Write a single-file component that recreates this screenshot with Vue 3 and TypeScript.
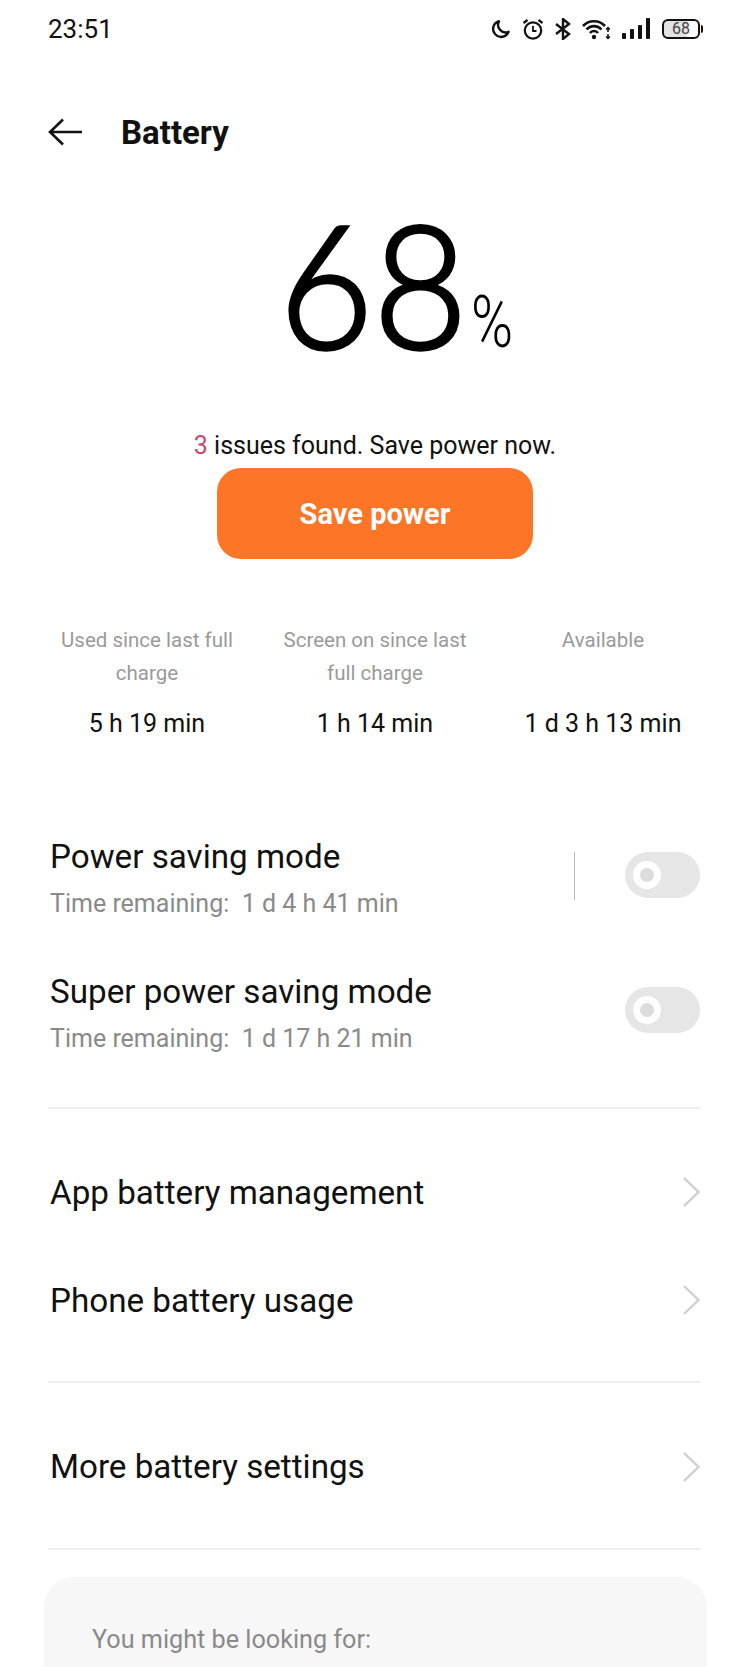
<script setup lang="ts">
interface Stat { label: string; value: string }
interface Mode { title: string; sub: string; divider: boolean }
const stats: Stat[] = [
  { label: 'Used since last full charge', value: '5 h 19 min' },
  { label: 'Screen on since last full charge', value: '1 h 14 min' },
  { label: 'Available', value: '1 d 3 h 13 min' },
]
const modes: Mode[] = [
  { title: 'Power saving mode', sub: 'Time remaining:\u00a0 1 d 4 h 41 min', divider: true },
  { title: 'Super power saving mode', sub: 'Time remaining:\u00a0 1 d 17 h 21 min', divider: false },
]
const links: string[] = ['App battery management', 'Phone battery usage']
</script>

<template>
  <div class="page">
    <div class="status">
      <span class="time">23:51</span>
      <div class="icons">
        <svg width="20" height="20" viewBox="0 0 20 20"><path d="M8 2.200a8 8 0 1 0 9.600 10.600A7.600 7.600 0 0 1 8 2.200z" fill="none" stroke="#111" stroke-width="2.400" stroke-linejoin="round"/></svg>
        <svg width="22" height="22" viewBox="0 0 22 22" fill="none" stroke="#111" stroke-width="2.200"><circle cx="11" cy="12.500" r="8.200"/><path d="M11 8v5h3.500" stroke-width="1.800"/><path d="M1.500 5l4-3M20.500 5l-4-3"/></svg>
        <svg width="16" height="22" viewBox="0 0 16 22" fill="none" stroke="#111" stroke-width="2.400"><path d="M1 6l13 10-6 5V1l6 5L1 16"/></svg>
        <svg width="29" height="22" viewBox="0 0 29 22" fill="none" stroke="#111" stroke-width="2.600"><path d="M1 8a15 15 0 0 1 22 0M4.500 11.500a10 10 0 0 1 15 0M8 15a5 5 0 0 1 8 0"/><circle cx="12" cy="19" r="2.200" fill="#111" stroke="none"/><path d="M26 10v4M26 16v4" stroke-width="1.600"/><path d="M24 11.500l2-2 2 2M24 18.500l2 2 2-2" stroke-width="1.300"/></svg>
        <svg width="28" height="22" viewBox="0 0 28 22" fill="#111"><rect x="0" y="15" width="4" height="6" rx="1"/><rect x="8" y="11" width="4" height="10" rx="1"/><rect x="16" y="7" width="4" height="14" rx="1"/><rect x="24" y="0" width="4" height="21" rx="1"/></svg>
        <div class="battery"><span class="level">68</span><i class="tip"></i></div>
      </div>
    </div>

    <header class="head">
      <svg width="34" height="28" viewBox="0 0 34 28" fill="none" stroke="#111" stroke-width="2.600"><path d="M15 1.500L2 14l13 12.500M2 14h32"/></svg>
      <h1>Battery</h1>
    </header>

    <div class="big"><span class="num">68</span><span class="pct">%</span></div>
    <p class="issues"><span class="red">3</span> issues found. Save power now.</p>
    <button class="save">Save power</button>

    <div class="stats">
      <div v-for="s in stats" :key="s.label" class="stat">
        <div class="label">{{ s.label }}</div>
        <div class="value">{{ s.value }}</div>
      </div>
    </div>

    <div class="modes">
      <div v-for="m in modes" :key="m.title" class="mode">
        <div class="mode-text">
          <div class="title">{{ m.title }}</div>
          <div class="sub">{{ m.sub }}</div>
        </div>
        <i v-if="m.divider" class="vline"></i>
        <div class="toggle"><i class="knob"></i></div>
      </div>
    </div>

    <hr class="rule" />

    <div class="links">
      <div v-for="l in links" :key="l" class="link">
        <span>{{ l }}</span>
        <svg width="18" height="32" viewBox="0 0 18 32" fill="none" stroke="#cfcfcf" stroke-width="2.400"><path d="M2 2l14.500 14L2 30"/></svg>
      </div>
    </div>

    <hr class="rule" />

    <div class="link solo">
      <span>More battery settings</span>
      <svg width="18" height="32" viewBox="0 0 18 32" fill="none" stroke="#cfcfcf" stroke-width="2.400"><path d="M2 2l14.500 14L2 30"/></svg>
    </div>

    <hr class="rule" />

    <section class="card">You might be looking for:</section>
  </div>
</template>

<style>
html, body { margin: 0; background: #fff; }
</style>

<style scoped>
.page {
  width: 750px;
  height: 1667px;
  overflow: hidden;
  background: #fff;
  color: #111;
  font-family: Roboto, "Liberation Sans", sans-serif;
}
.status {
  height: 56px;
  padding: 2px 50px 0 48px;
  box-sizing: border-box;
  display: flex;
  align-items: center;
  justify-content: space-between;
}
.time { font-size: 26px; }
.icons { display: flex; align-items: center; gap: 11px; }
.battery {
  position: relative;
  margin-left: 1px;
  width: 38px;
  height: 20px;
  border: 2px solid #111;
  border-radius: 6px;
  background: linear-gradient(90deg, #e2e2e2 68%, #fff 68%);
  display: flex;
  align-items: center;
  justify-content: center;
  box-sizing: border-box;
}
.level { font-size: 16px; color: #444; line-height: 1; }
.tip {
  position: absolute;
  right: -5px;
  top: 4px;
  width: 2px;
  height: 8px;
  background: #111;
  border-radius: 0 2px 2px 0;
}
.head {
  margin-top: 56px;
  height: 40px;
  padding-left: 48px;
  display: flex;
  align-items: center;
  gap: 39px;
}
.head h1 { margin: 0; font-size: 33px; font-weight: 700; }
.big {
  margin-top: 37px;
  height: 190px;
  display: flex;
  justify-content: center;
  align-items: flex-end;
  padding-left: 38px;
}
.num {
  display: inline-block;
  width: 190px;
  margin-bottom: 2px;
  white-space: nowrap;
  font-family: Lato, Roboto, sans-serif;
  font-weight: 300;
  font-size: 172px;
  line-height: 188px;
  color: #000;
  -webkit-text-stroke: 3.5px #000;
  transform: scaleX(0.945);
  transform-origin: left center;
}
.pct {
  display: inline-block;
  width: 39px;
  margin: 0 0 20px 2px;
  white-space: nowrap;
  font-size: 73px;
  font-weight: 300;
  line-height: 1;
  color: #000;
  transform: scaleX(0.78);
  transform-origin: left center;
}
.issues {
  margin: 51px 0 0;
  height: 32px;
  line-height: 32px;
  font-size: 25px;
  text-align: center;
}
.red { color: #c9486f; }
.save {
  display: block;
  margin: 6px auto 0;
  width: 316px;
  height: 91px;
  border: 0;
  border-radius: 24px;
  background: #fd7527;
  color: #fff;
  font: 700 29px Roboto, sans-serif;
}
.stats {
  margin-top: 65px;
  padding: 0 33px;
  display: grid;
  grid-template-columns: repeat(3, 228px);
}
.stat { padding: 0 22px; text-align: center; }
.label { height: 66px; font-size: 20.5px; line-height: 33px; color: #9a9a9a; }
.value { margin-top: 18px; font-size: 25px; line-height: 32px; color: #111; }
.modes { margin-top: 97px; padding: 0 50px 0 50px; }
.mode { height: 135px; display: flex; align-items: flex-start; }
.mode-text { flex: 1; }
.title { font-size: 33.2px; line-height: 40px; color: #111; }
.sub { margin-top: 11px; font-size: 25px; line-height: 32px; color: #8a8a8a; }
.vline { width: 1px; height: 48px; margin: 15px 50px 0 0; background: #bbb; }
.toggle {
  margin-top: 15px;
  width: 75px;
  height: 46px;
  border-radius: 23px;
  background: #e6e6e6;
  display: flex;
  align-items: center;
  padding-left: 8px;
  box-sizing: border-box;
}
.knob {
  width: 28px;
  height: 28px;
  border-radius: 50%;
  box-sizing: border-box;
  border: 7px solid #fff;
  background: #dcdcdc;
}
.rule { margin: 0 50px 0 48px; border: 0; border-top: 2px solid #eeeeee; }
.links { padding: 29px 0 27px; }
.link {
  height: 108px;
  padding: 0 50px;
  display: flex;
  align-items: center;
  justify-content: space-between;
  font-size: 33.2px;
  color: #111;
}
.solo { height: 165px; padding-top: 2px; box-sizing: border-box; }
.card {
  margin: 27px 43px 0 44px;
  height: 200px;
  padding: 48px 48px;
  border-radius: 30px;
  background: #f7f7f7;
  color: #8a8a8a;
  font-size: 25.2px;
  box-sizing: border-box;
}
</style>
